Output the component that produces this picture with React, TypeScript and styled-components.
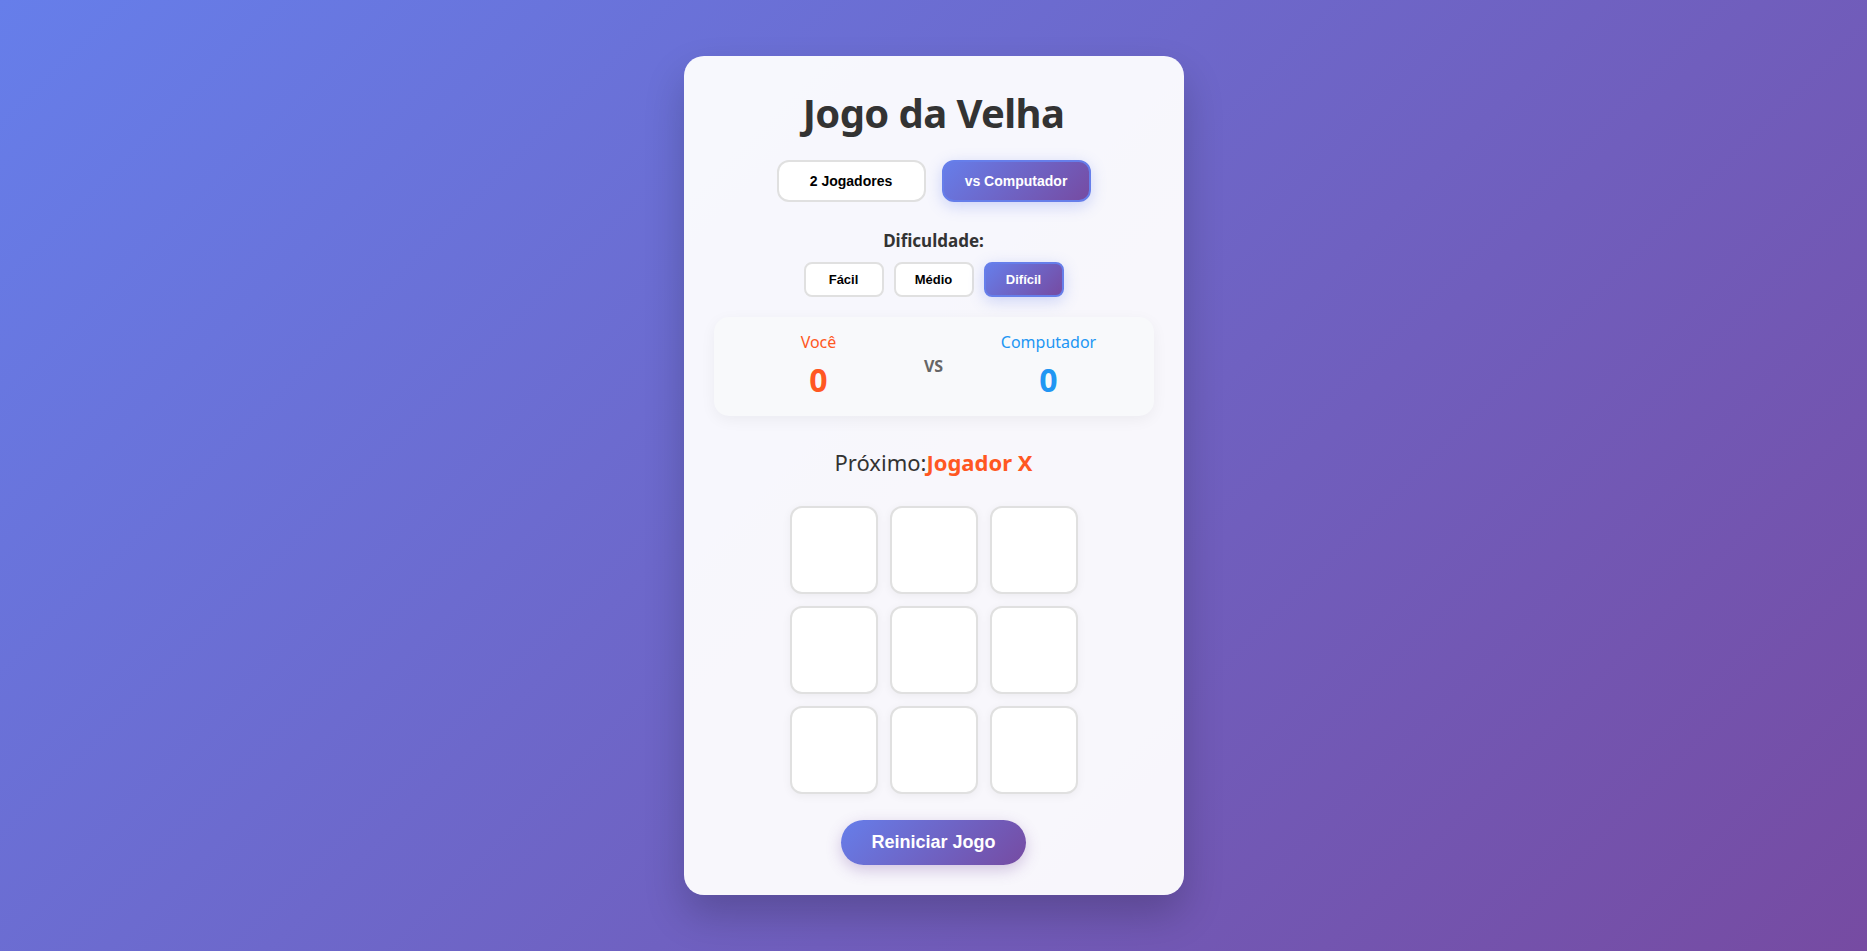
import { useState } from "react"
import styled, { createGlobalStyle, css } from "styled-components"

const GlobalStyle = createGlobalStyle`
    * {
        box-sizing: border-box;
    }
    html, body {
        margin: 0;
        padding: 0;
    }
    body {
        font-family: "Noto Sans", "Open Sans", sans-serif;
        background: linear-gradient(135deg, #667eea 0%, #764ba2 100%);
        min-height: 100vh;
    }
`

const Page = styled.div`
    min-height: 100vh;
    display: flex;
    align-items: center;
    justify-content: center;
`

const Card = styled.div`
    width: 500px;
    padding: 30px;
    background: rgba(255, 255, 255, 0.95);
    border-radius: 20px;
    box-shadow: 0 20px 40px rgba(0, 0, 0, 0.2);
    display: flex;
    flex-direction: column;
    align-items: center;
`

const Title = styled.h1`
    margin: 3px 0 23px;
    font-size: 40px;
    line-height: 1.2;
    letter-spacing: -0.6px;
    font-weight: 700;
    color: #333;
`

const ModeRow = styled.div`
    display: flex;
    gap: 16px;
`

const gradient = css`
    background: linear-gradient(135deg, #667eea 0%, #764ba2 100%);
    color: white;
    border-color: #667eea;
    box-shadow: 0 4px 15px rgba(102, 126, 234, 0.3);
`

const ModeButton = styled.button<{ $active?: boolean }>`
    min-width: 149px;
    padding: 11px 20px;
    font-family: "Liberation Sans", Arial, sans-serif;
    font-size: 14px;
    font-weight: 700;
    color: #000;
    background: white;
    border: 2px solid #e0e0e0;
    border-radius: 12px;
    cursor: pointer;
    ${(p) => p.$active && gradient}
`

const Label = styled.div`
    margin-top: 29px;
    font-size: 17px;
    line-height: 1.2;
    font-weight: 700;
    color: #333;
`

const DiffRow = styled.div`
    display: flex;
    gap: 10px;
    margin-top: 11px;
`

const DiffButton = styled.button<{ $active?: boolean }>`
    min-width: 80px;
    padding: 8px 16px;
    font-family: "Liberation Sans", Arial, sans-serif;
    font-size: 13px;
    font-weight: 700;
    color: #000;
    background: white;
    border: 2px solid #e0e0e0;
    border-radius: 8px;
    cursor: pointer;
    ${(p) => p.$active && gradient}
`

const ScoreBoard = styled.div`
    width: 100%;
    margin-top: 20px;
    padding: 16px 0;
    background: #f8f9fb;
    border-radius: 15px;
    box-shadow: 0 4px 15px rgba(0, 0, 0, 0.05);
    display: flex;
    justify-content: center;
    align-items: center;
`

const ScoreItem = styled.div<{ $color: string }>`
    width: 130px;
    text-align: center;
    color: ${(p) => p.$color};
`

const ScoreName = styled.div`
    font-size: 16px;
    line-height: 1.2;
    margin-bottom: 9px;
`

const ScoreValue = styled.div`
    font-size: 32px;
    line-height: 1.2;
    font-weight: 700;
`

const Versus = styled.div`
    width: 100px;
    text-align: center;
    font-size: 16px;
    font-weight: 700;
    color: #666;
`

const Status = styled.div`
    margin-top: 33px;
    font-size: 22px;
    line-height: 1.2;
    color: #333;
`

const Player = styled.span`
    font-weight: 700;
    color: #ff5722;
`

const Board = styled.div`
    margin-top: 31px;
    display: grid;
    grid-template-columns: repeat(3, 88px);
    grid-auto-rows: 88px;
    gap: 12px;
`

const Cell = styled.button`
    background: white;
    border: 2px solid #e0e0e0;
    border-radius: 12px;
    box-shadow: 0 2px 10px rgba(0, 0, 0, 0.05);
    font-family: "Liberation Sans", Arial, sans-serif;
    font-size: 44px;
    font-weight: 700;
    cursor: pointer;
`

const ResetButton = styled.button`
    margin-top: 26px;
    padding: 12px 30px;
    font-family: "Liberation Sans", Arial, sans-serif;
    font-size: 18px;
    font-weight: 700;
    color: white;
    border: none;
    border-radius: 25px;
    background: linear-gradient(135deg, #667eea 0%, #764ba2 100%);
    box-shadow: 0 5px 15px rgba(118, 75, 162, 0.3);
    cursor: pointer;
`

export default function App() {
    const [mode, setMode] = useState("cpu")
    const [level, setLevel] = useState("dificil")
    const [cells, setCells] = useState<string[]>(Array(9).fill(""))
    const levels = [
        { id: "facil", label: "Fácil" },
        { id: "medio", label: "Médio" },
        { id: "dificil", label: "Difícil" },
    ]
    return <Page>
        <GlobalStyle />
        <Card>
            <Title>Jogo da Velha</Title>
            <ModeRow>
                <ModeButton $active={mode === "pvp"} onClick={() => setMode("pvp")}>2 Jogadores</ModeButton>
                <ModeButton $active={mode === "cpu"} onClick={() => setMode("cpu")}>vs Computador</ModeButton>
            </ModeRow>
            <Label>Dificuldade:</Label>
            <DiffRow>
                {levels.map((l) => (
                    <DiffButton key={l.id} $active={level === l.id} onClick={() => setLevel(l.id)}>{l.label}</DiffButton>
                ))}
            </DiffRow>
            <ScoreBoard>
                <ScoreItem $color="#ff5722">
                    <ScoreName>Você</ScoreName>
                    <ScoreValue>0</ScoreValue>
                </ScoreItem>
                <Versus>VS</Versus>
                <ScoreItem $color="#2196f3">
                    <ScoreName>Computador</ScoreName>
                    <ScoreValue>0</ScoreValue>
                </ScoreItem>
            </ScoreBoard>
            <Status>Próximo:<Player>Jogador X</Player></Status>
            <Board>
                {cells.map((c, i) => <Cell key={i}>{c}</Cell>)}
            </Board>
            <ResetButton onClick={() => setCells(Array(9).fill(""))}>Reiniciar Jogo</ResetButton>
        </Card>
    </Page>
}
